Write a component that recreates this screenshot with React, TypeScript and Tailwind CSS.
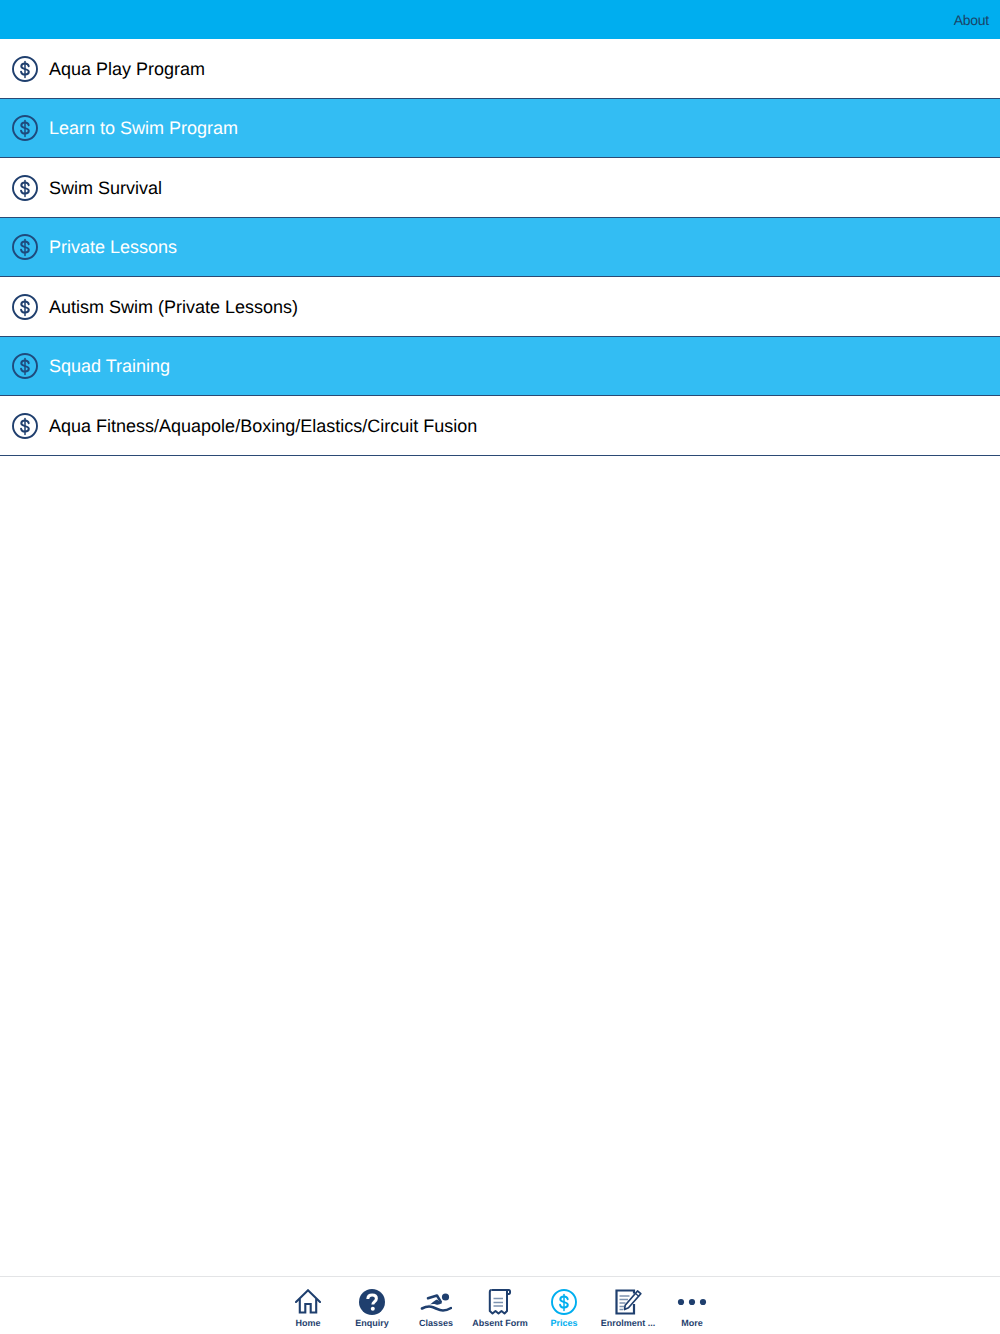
const rows = [
  "Aqua Play Program",
  "Learn to Swim Program",
  "Swim Survival",
  "Private Lessons",
  "Autism Swim (Private Lessons)",
  "Squad Training",
  "Aqua Fitness/Aquapole/Boxing/Elastics/Circuit Fusion",
];

function Dollar({ size, color }: { size: number; color: string }) {
  return (
    <svg width={size} height={size} viewBox="0 0 26 26" fill="none" className="block shrink-0">
      <circle cx="13" cy="13" r="12" stroke={color} strokeWidth="1.900" />
      <path
        d="M16.700 10.200c-.3-1.700-1.800-2.700-3.700-2.700-2.200 0-3.700 1.100-3.700 2.800 0 3.700 7.500 1.900 7.500 5.500 0 1.700-1.600 2.800-3.800 2.800-2.100 0-3.600-1-3.900-2.800"
        stroke={color}
        strokeWidth="2"
        strokeLinecap="round"
      />
      <path d="M13 5.500v16" stroke={color} strokeWidth="1.500" strokeLinecap="round" />
    </svg>
  );
}

const navy = "#1f3f6e";

function Home() {
  return (
    <svg width="26" height="26" viewBox="0 0 26 26" fill="none" stroke={navy} strokeWidth="2.100" strokeLinejoin="miter" strokeLinecap="round">
      <path d="M1 13 13 1.300 25 13" />
      <path d="M4.800 10.500v13h5.500V15h5.400v8.500h5.500v-13" />
    </svg>
  );
}
function Enquiry() {
  return (
    <svg width="26" height="26" viewBox="0 0 26 26">
      <circle cx="13" cy="13" r="13" fill={navy} />
      <path d="M8.800 10c.1-2.500 1.900-4 4.400-4 2.500 0 4.200 1.400 4.200 3.500 0 3-3.600 3.100-3.600 6" fill="none" stroke="#fff" strokeWidth="3" />
      <circle cx="13.800" cy="19.800" r="2" fill="#fff" />
    </svg>
  );
}
function Classes() {
  return (
    <svg width="32" height="24" viewBox="0 0 32 24" fill="none">
      <circle cx="25.500" cy="7" r="3.600" fill={navy} />
      <path d="M8 8.300 17 5.500l3.800 6.300" stroke={navy} strokeWidth="2.500" strokeLinejoin="round" strokeLinecap="round" />
      <path d="M8 15c3-.3 4.500-3.500 9-5.500l5 3.800c-2.500 1-3.500 1.900-6 1.200-2.500-.8-5-.5-8 .5z" fill={navy} />
      <path d="M2 18.500c4-2.200 7.500-2.500 11-1.300 3.500 1.300 6.500 3.300 10 3.300 3 0 5.500-1 8-2.500" stroke={navy} strokeWidth="2.600" strokeLinecap="round" />
    </svg>
  );
}
function Absent() {
  return (
    <svg width="24" height="26" viewBox="0 0 24 26" fill="none" stroke={navy} strokeWidth="2" strokeLinejoin="round">
      <path d="M3.500 1h17.300c1.700 0 1.700 4 0 4H18.500" />
      <path d="M3.500 1C2.300 1 1.800 2 1.800 3.200V22l2.700 2.500 3-2.500 3 2.500 3-2.500 3 2.500 2.500-2.500V1.500" />
      <path d="M5.500 9.500h9.500M5.500 13.500h9.500M5.500 17h9.500" strokeWidth="1.700" stroke="#7d93b0" />
    </svg>
  );
}
function Enrol() {
  return (
    <svg width="27" height="26" viewBox="0 0 27 26" fill="none" stroke={navy}>
      <path d="M19 15v9.500H1.500V1.500H19v3" strokeWidth="2.200" />
      <path d="M4.500 7h10M4.500 10.500h8.500M4.500 14h6M4.500 17.500h4.500M4.500 20.500h3.500" strokeWidth="1.300" stroke="#7d93b0" />
      <path d="M22.500 2 25.800 4.700 13.500 18.700 9.500 20.500l.7-4.300z" strokeWidth="1.700" strokeLinejoin="round" fill="#fff" />
      <path d="M20.500 4.500 24 7.500" strokeWidth="1.300" />
    </svg>
  );
}
function More() {
  return (
    <svg width="30" height="8" viewBox="0 0 30 8" fill={navy}>
      <circle cx="4" cy="4" r="3.100" />
      <circle cx="15" cy="4" r="3.100" />
      <circle cx="26" cy="4" r="3.100" />
    </svg>
  );
}

const tabs = [
  { label: "Home", icon: <Home /> },
  { label: "Enquiry", icon: <Enquiry /> },
  { label: "Classes", icon: <Classes /> },
  { label: "Absent Form", icon: <Absent /> },
  { label: "Prices", icon: <Dollar size={26} color="#00aeef" />, active: true },
  { label: "Enrolment ...", icon: <Enrol /> },
  { label: "More", icon: <More /> },
];

export default function App() {
  return (
    <div className="flex h-[1334px] w-[1000px] flex-col overflow-hidden bg-white font-['Liberation_Sans',Arial,sans-serif] [text-rendering:geometricPrecision]">
      <header className="flex h-[39px] shrink-0 items-center justify-end bg-[#00aeef] pr-[11px] pt-[2px]">
        <span className="text-[14px] tracking-[-0.25px] text-[#1a4468]">About</span>
      </header>
      <main className="flex-1">
        {rows.map((r, i) => (
          <div
            key={r}
            className={`flex h-[59.500px] items-center gap-[11px] border-b border-[#2b4a75] pl-[12px] pt-[1px] ${i % 2 ? "bg-[#33bdf3] text-white" : "bg-white text-black"}`}
          >
            <Dollar size={26} color={i % 2 ? "#1f4a7c" : "#1f3f6e"} />
            <span className="text-[18px] leading-none">{r}</span>
          </div>
        ))}
      </main>
      <nav className="flex h-[58px] shrink-0 justify-center border-t border-[#e3e4e6] bg-white">
        {tabs.map((t) => (
          <div key={t.label} className="flex w-[64px] flex-col items-center">
            <div className="flex h-[38px] w-full items-end justify-center">
              <div className="flex h-[26px] items-center justify-center">{t.icon}</div>
            </div>
            <span className={`mt-[3px] whitespace-nowrap text-[9px] font-bold leading-[11px] ${t.active ? "text-[#00aeef]" : "text-[#1f3f6e]"}`}>
              {t.label}
            </span>
          </div>
        ))}
      </nav>
    </div>
  );
}
